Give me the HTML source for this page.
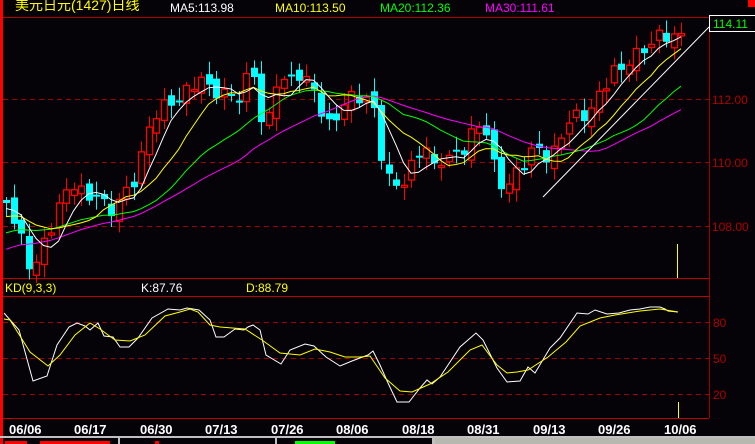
<!DOCTYPE html>
<html><head><meta charset="utf-8">
<style>
html,body{margin:0;padding:0;background:#050308;width:755px;height:444px;overflow:hidden}
svg{display:block}
text{font-family:"Liberation Sans","Noto Sans CJK SC",sans-serif}
</style></head><body>
<svg id="s" width="755" height="444" viewBox="0 0 755 444" xmlns="http://www.w3.org/2000/svg">
<rect width="755" height="444" fill="#050308"/>
<rect x="0" y="0" width="3" height="444" fill="#ff0000"/>
<line x1="3" y1="17.5" x2="709" y2="17.5" stroke="#b00000"/>
<line x1="709.5" y1="17" x2="709.5" y2="418" stroke="#a00000"/>
<line x1="3" y1="278.5" x2="709" y2="278.5" stroke="#c00000"/>
<line x1="3" y1="296.5" x2="709" y2="296.5" stroke="#c00000"/>
<line x1="3" y1="418.5" x2="709" y2="418.5" stroke="#c00000"/>
<rect x="748" y="0" width="7" height="7" fill="#ff0000"/>
<g stroke="#a00000" stroke-dasharray="5,4">
<line x1="3" y1="99.5" x2="709" y2="99.5"/>
<line x1="3" y1="162.5" x2="709" y2="162.5"/>
<line x1="3" y1="226.5" x2="709" y2="226.5"/>
<line x1="3" y1="322.5" x2="709" y2="322.5"/>
<line x1="3" y1="358.5" x2="709" y2="358.5"/>
<line x1="3" y1="394.5" x2="709" y2="394.5"/>
</g>
<g fill="#b00000" font-size="12">
<text x="712" y="104">112.00</text>
<text x="712" y="167">110.00</text>
<text x="712" y="231">108.00</text>
<text x="713" y="327">80</text>
<text x="713" y="363">50</text>
<text x="713" y="399">20</text>
</g>
<rect x="709.5" y="15.5" width="46" height="16" fill="#050308" stroke="#fff"/>
<text x="713" y="28" fill="#00ff00" font-size="12">114.11</text>
<text x="15" y="10" fill="#ffff00" font-size="14">美元日元(1427)日线</text>
<g font-size="12">
<text x="170" y="12" fill="#fff">MA5:113.98</text>
<text x="275" y="12" fill="#ffff00">MA10:113.50</text>
<text x="380" y="12" fill="#00ff00">MA20:112.36</text>
<text x="485" y="12" fill="#ff00ff">MA30:111.61</text>
<text x="5" y="292" fill="#ffff00">KD(9,3,3)</text>
<text x="141" y="292" fill="#fff">K:87.76</text>
<text x="246" y="292" fill="#ffff00">D:88.79</text>
</g>
<g id="c"></g>
<line x1="543" y1="197" x2="709" y2="27" stroke="#fff"/>
<line x1="677.5" y1="244" x2="677.5" y2="278" stroke="#ffff00"/>
<line x1="678.5" y1="402" x2="678.5" y2="418" stroke="#ffff00"/>
<polyline fill="none" stroke="#fff" points="4,313 19,330 33,381 47,376 57,345 69,327 77,323 85,326 90,330 98,323 104,336 113,337 120,347 129,347 138,338 152,318 168,309 180,310 187,308 199,310 210,320 216,337 224,337 235,329 244,330 248,327 253,325 260,330 266,355 281,364 290,350 305,344 314,346 326,357 340,366 352,361 368,355 373,351 380,365 388,383 397,402 409,402 420,388 427,380 432,384 440,377 448,365 460,347 476,333 483,340 497,368 507,382 520,381 528,367 535,373 550,348 560,338 577,313 588,314 595,310 607,314 619,313 630,310 640,309 650,307 660,307 665,309 668,311 678,312"/>
<polyline fill="none" stroke="#ffff00" points="4,319 10,320 30,352 48,366 60,355 75,335 90,323 100,329 115,340 130,341 145,335 165,316 180,312 190,309 198,312 210,325 220,327 245,329 262,340 280,353 300,355 315,349 330,352 345,357 360,357 370,356 385,378 400,391 412,392 430,384 448,372 470,350 482,345 497,365 507,373 517,372 528,370 548,357 566,342 580,326 600,318 615,315 640,311 660,309 678,312"/>
<g fill="#fff" font-family="Liberation Sans Narrow,Liberation Sans,sans-serif" font-size="13" font-weight="bold">
<text x="9" y="434">06/06</text><text x="74" y="434">06/17</text><text x="140" y="434">06/30</text>
<text x="205" y="434">07/13</text><text x="271" y="434">07/26</text><text x="336" y="434">08/06</text>
<text x="402" y="434">08/18</text><text x="467" y="434">08/31</text><text x="533" y="434">09/13</text>
<text x="598" y="434">09/26</text><text x="664" y="434">10/06</text>
</g>
<rect x="0" y="436" width="755" height="2" fill="#c0c0c0"/>
<rect x="435" y="438" width="320" height="6" fill="#b8b8b0"/>
<rect x="118" y="438" width="2" height="6" fill="#c0c0c0"/>
<rect x="275" y="438" width="2" height="6" fill="#c0c0c0"/>
<rect x="432" y="438" width="3" height="6" fill="#c0c0c0"/>
<rect x="5" y="441" width="22" height="3" fill="#ff0000"/>
<rect x="40" y="441" width="70" height="3" fill="#ff0000"/>
<rect x="155" y="441" width="4" height="3" fill="#ff0000"/>
<rect x="295" y="441" width="40" height="3" fill="#00ff00"/>
</svg>
<script>
(function(){
var kp=[[6,203],[12,215],[19,232],[26,262],[33,271],[40,247],[48,241],[55,207],[63,204],[70,178],[77,188],[85,196],[92,203],[99,183],[106,219],[113,208],[121,195],[128,192],[136,175],[145,140],[153,115],[162,107],[172,103],[182,97],[192,85],[201,78],[209,90],[219,92],[229,96],[239,97],[247,78],[256,72],[265,158],[272,80],[282,82],[292,78],[300,73],[308,85],[316,91],[323,120],[330,128],[338,112],[346,100],[356,95],[364,100],[372,101],[378,140],[386,178],[393,183],[400,186],[408,175],[417,152],[426,148],[434,170],[442,157],[450,160],[458,150],[466,148],[474,128],[482,122],[489,140],[495,175],[503,186],[510,185],[518,168],[525,162],[533,150],[540,148],[548,160],[556,150],[565,122],[573,120],[580,112],[588,118],[595,100],[603,88],[612,70],[618,76],[625,60],[632,61],[640,50],[647,47],[655,40],[662,32],[670,38],[680,36]];
function interp(x){for(var i=0;i<kp.length-1;i++){if(x<=kp[i+1][0]){var a=kp[i],b=kp[i+1],t=(x-a[0])/(b[0]-a[0]);return a[1]+(b[1]-a[1])*t;}}return kp[kp.length-1][1];}
var N=91,step=7.5,x0=6,cl=[],xs=[];
for(var i=0;i<N;i++){var x=x0+i*step;xs.push(x);cl.push(interp(x)+Math.sin(i*2.3)*7);}
var g=document.getElementById('c'),h='';
var pre=[];for(var j=0;j<30;j++)pre.push(300-95*j/29);
var all=pre.concat(cl);
for(var i=0;i<N;i++){
 var o=i?cl[i-1]+Math.sin(i*5.1)*6:200,c=cl[i];
 var top=Math.min(o,c),bot=Math.max(o,c);if(bot-top<2)bot=top+2;
 var hi=top-3-Math.abs(Math.sin(i*1.7))*10,lo=bot+3+Math.abs(Math.cos(i*1.3))*10;
 var x=Math.round(xs[i]);
 if(c>o){
  h+='<line x1="'+(x+0.5)+'" y1="'+hi+'" x2="'+(x+0.5)+'" y2="'+lo+'" stroke="#00ffff"/>';
  h+='<rect x="'+(x-3)+'" y="'+top+'" width="7" height="'+(bot-top)+'" fill="#00ffff"/>';
 }else{
  h+='<line x1="'+(x+0.5)+'" y1="'+hi+'" x2="'+(x+0.5)+'" y2="'+top+'" stroke="#ff0000"/>';
  h+='<line x1="'+(x+0.5)+'" y1="'+bot+'" x2="'+(x+0.5)+'" y2="'+lo+'" stroke="#ff0000"/>';
  h+='<rect x="'+(x-2.5)+'" y="'+top+'" width="6" height="'+(bot-top)+'" fill="#050308" stroke="#ff0000" stroke-width="1.3"/>';
 }
}
function ma(n,col){var p=[];for(var i=0;i<N;i++){var s=0,k=i+30;for(var j=0;j<n;j++)s+=all[k-j];p.push(xs[i].toFixed(1)+','+(s/n).toFixed(1));}
 return '<polyline fill="none" stroke="'+col+'" points="'+p.join(' ')+'"/>';}
h+=ma(30,'#ff00ff')+ma(20,'#00ff00')+ma(10,'#ffff00')+ma(5,'#ffffff');
g.innerHTML=h;
})();
</script>
</body></html>
